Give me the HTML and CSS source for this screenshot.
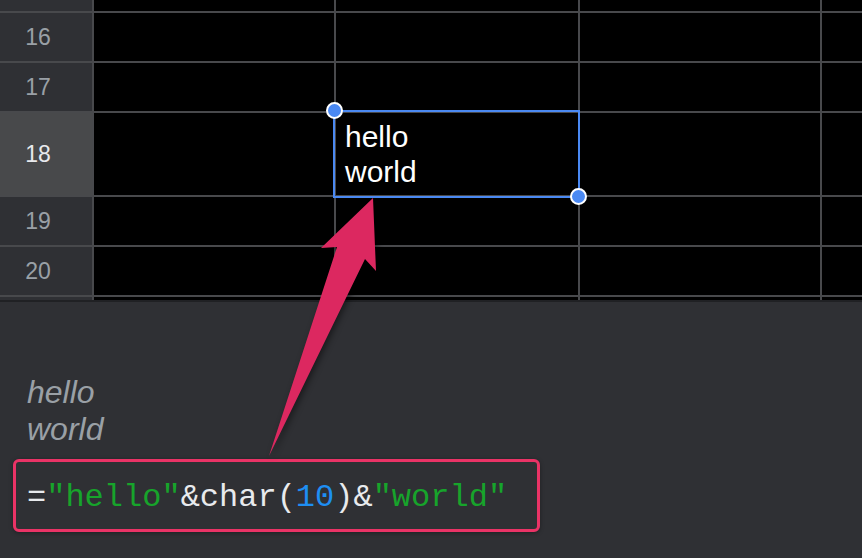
FILE: index.html
```html
<!DOCTYPE html>
<html lang="en">
  <head>
    <meta charset="UTF-8" />
    <title>Sheet – line break formula</title>
    <link rel="stylesheet" href="styles.css">
  </head>
  <body>
    <div class="sheet">
      <div class="row-head"></div>
      <div class="cell"></div>
      <div class="cell"></div>
      <div class="cell"></div>
      <div class="cell"></div>

      <div class="row-head">16</div>
      <div class="cell"></div>
      <div class="cell"></div>
      <div class="cell"></div>
      <div class="cell"></div>

      <div class="row-head">17</div>
      <div class="cell"></div>
      <div class="cell"></div>
      <div class="cell"></div>
      <div class="cell"></div>

      <div class="row-head selected">18</div>
      <div class="cell"></div>
      <div class="cell active">
        <div class="cell-text">hello<br />world</div>
        <span class="handle top-left"></span>
        <span class="handle bottom-right"></span>
      </div>
      <div class="cell"></div>
      <div class="cell"></div>

      <div class="row-head">19</div>
      <div class="cell"></div>
      <div class="cell"></div>
      <div class="cell"></div>
      <div class="cell"></div>

      <div class="row-head">20</div>
      <div class="cell"></div>
      <div class="cell"></div>
      <div class="cell"></div>
      <div class="cell"></div>

      <div class="row-head"></div>
      <div class="cell"></div>
      <div class="cell"></div>
      <div class="cell"></div>
      <div class="cell"></div>
    </div>

    <div class="panel">
      <div class="preview">hello<br />world</div>
      <div class="formula"><span class="op">=</span><span class="str">"hello"</span><span class="op">&amp;char(</span><span class="num">10</span><span class="op">)&amp;</span><span class="str">"world"</span></div>
    </div>

    <!-- callout arrow from the formula up to the cell -->
    <svg class="arrow" viewBox="0 0 862 558" width="862" height="558">
      <polygon
        points="373,198 376,271 365,259 269,456 337,247 321,248"
        fill="#dc2860"
      />
    </svg>
  </body>
</html>
```

FILE: styles.css
```css
:root {
  --line-color: #48494c;
  --head-bg: #2f3034;
  --head-selected-bg: #48494b;
  --head-text: #9aa0a6;
  --cell-bg: #000000;
  --panel-bg: #2f3034;
  --select-blue: #4a89f3;
  --callout-pink: #ea3366;
  --code-green: #17a42b;
  --code-blue: #1e8ef2;
  --code-text: #e8eaed;
}

html,
body {
  margin: 0;
  padding: 0;
  width: 862px;
  height: 558px;
  overflow: hidden;
  background: var(--panel-bg);
  font-family: "Liberation Sans", Arial, sans-serif;
}

body {
  position: relative;
}

.sheet {
  display: grid;
  grid-template-columns: 92px 240px 242px 240px 40px;
  grid-template-rows: 11px 48px 48px 82px 48px 48px 3px;
  gap: 2px;
  background: var(--line-color);
  border-bottom: 2px solid #202124;
}

.row-head {
  background: var(--head-bg);
  color: var(--head-text);
  font-size: 23px;
  display: flex;
  align-items: center;
  justify-content: center;
  padding-right: 16px;
  overflow: hidden;
}
.row-head.selected {
  background: var(--head-selected-bg);
  color: var(--code-text);
}

.cell {
  background: var(--cell-bg);
}

.cell.active {
  position: relative;
}
.cell.active::before {
  content: "";
  position: absolute;
  inset: -3px -2px -3px -3px;
  border: 2px solid var(--select-blue);
}

.cell-text {
  padding: 6px 8px 0 9px;
  color: #ffffff;
  font-size: 30px;
  line-height: 35px;
}

.handle {
  position: absolute;
  width: 13px;
  height: 13px;
  border-radius: 50%;
  background: var(--select-blue);
  border: 2px solid #ffffff;
  z-index: 2;
}
.handle.top-left {
  left: -10px;
  top: -11px;
}
.handle.bottom-right {
  right: -9px;
  bottom: -10px;
}

.panel {
  padding: 72px 0 0 13px;
}

.preview {
  padding-left: 14px;
  color: var(--head-text);
  font-style: italic;
  font-size: 32px;
  line-height: 37px;
}

.formula {
  display: inline-block;
  margin-top: 11px;
  padding: 16px 30px 11px 11px;
  border: 3px solid var(--callout-pink);
  border-radius: 6px;
  box-shadow: 0 1px 4px rgba(0, 0, 0, 0.35);
  font-family: "Liberation Mono", "Courier New", monospace;
  font-size: 32px;
  line-height: 40px;
  white-space: pre;
}
.formula .op {
  color: var(--code-text);
}
.formula .str {
  color: var(--code-green);
}
.formula .num {
  color: var(--code-blue);
}

.arrow {
  position: absolute;
  left: 0;
  top: 0;
  pointer-events: none;
  filter: drop-shadow(2px 3px 3px rgba(0, 0, 0, 0.45));
}
```
